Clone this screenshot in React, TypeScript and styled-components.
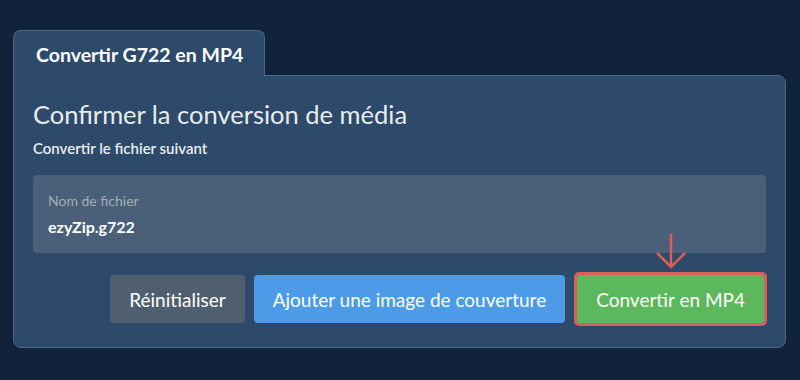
import React from "react";
import styled, { createGlobalStyle } from "styled-components";

const Global = createGlobalStyle`
  html, body { margin: 0; padding: 0; background: #11233a; }
  body { font-family: Lato, "Noto Sans", sans-serif; width: 800px; height: 380px; overflow: hidden; }
`;

const Page = styled.div`
  padding: 30px 14px 0 13px;
`;

const Tab = styled.div`
  width: 252px;
  height: 46px;
  box-sizing: border-box;
  background: #2d4a6b;
  border: 1px solid #4a6789;
  border-bottom: none;
  border-radius: 8px 8px 0 0;
  color: #ffffff;
  font-weight: 700;
  font-size: 19.5px;
  padding: 12px 0 0 22px;
  position: relative;
  z-index: 1;
  margin-bottom: -1px;
`;

const Panel = styled.div`
  box-sizing: border-box;
  width: 773px;
  height: 273px;
  background: #2d4a6b;
  border: 1px solid #4a6789;
  border-radius: 0 8px 8px 8px;
  padding: 21px 19px 0 19px;
  display: flex;
  flex-direction: column;
`;

const Heading = styled.h1`
  margin: 0;
  font-size: 25.5px;
  font-weight: 400;
  color: #e9ecef;
  line-height: 34px;
`;

const Sub = styled.div`
  margin-top: 8px;
  font-size: 15px;
  font-weight: 600;
  color: #e9ecef;
  line-height: 18px;
`;

const FileBox = styled.div`
  margin-top: 18px;
  height: 78px;
  box-sizing: border-box;
  background: #4a5f78;
  border-radius: 4px;
  padding: 18px 15px 0 15px;
  display: flex;
  flex-direction: column;
`;

const Label = styled.div`
  font-size: 14px;
  color: #a3adb9;
  line-height: 16px;
`;

const Value = styled.div`
  margin-top: 8px;
  font-size: 16px;
  font-weight: 700;
  color: #ffffff;
  line-height: 20px;
`;

const Actions = styled.div`
  margin-top: 22px;
  display: flex;
  justify-content: flex-end;
  gap: 9px;
`;

const Button = styled.button<{ $bg: string; $hl?: boolean }>`
  font-family: Lato, "Noto Sans", sans-serif;
  font-size: 19px;
  color: #ffffff;
  background: ${(p) => p.$bg};
  border: none;
  border-radius: 4px;
  height: 48px;
  padding: 0 19px;
  position: relative;
  ${(p) =>
    p.$hl
      ? `outline: 3px solid #dd5d59; outline-offset: 0; margin-left: 3px; margin-right: 2px; border-radius: 2px;`
      : ""}
`;

const Arrow = styled.svg`
  position: absolute;
  left: 50%;
  top: -43px;
  transform: translateX(-50%);
  width: 32px;
  height: 40px;
`;

export default function App() {
  return (
    <>
      <Global />
      <Page>
        <Tab>Convertir G722 en MP4</Tab>
        <Panel>
          <Heading>Confirmer la conversion de média</Heading>
          <Sub>Convertir le fichier suivant</Sub>
          <FileBox>
            <Label>Nom de fichier</Label>
            <Value>ezyZip.g722</Value>
          </FileBox>
          <Actions>
            <Button $bg="#4f5f70">Réinitialiser</Button>
            <Button $bg="#4d9be6">Ajouter une image de couverture</Button>
            <Button $bg="#5cb85c" $hl>
              Convertir en MP4
              <Arrow viewBox="0 0 32 40">
                <path d="M16 2 V35 M2 21 L16 35 L30 21" fill="none" stroke="#dd5d59" strokeWidth="2.5" />
              </Arrow>
            </Button>
          </Actions>
        </Panel>
      </Page>
    </>
  );
}
